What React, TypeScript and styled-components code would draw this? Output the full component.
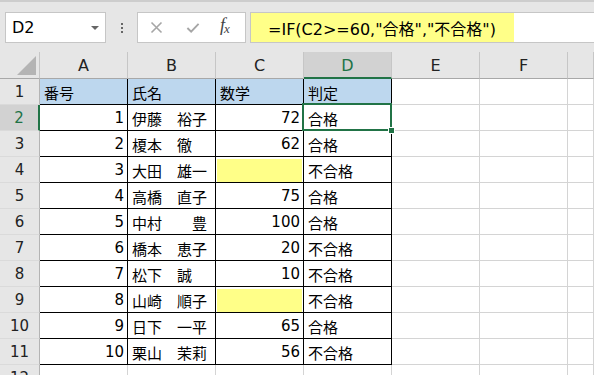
import React from "react";
import styled, { createGlobalStyle, css } from "styled-components";

const GREEN = "#217346";
const YELLOW = "#ffff88";

const GlobalStyle = createGlobalStyle`
  html, body {
    margin: 0;
    padding: 0;
    background: #fff;
  }
  body {
    width: 594px;
    height: 375px;
    overflow: hidden;
    font-family: "DejaVu Sans", "Noto Sans CJK JP", sans-serif;
    color: #000;
  }
`;

type Align = "left" | "right" | "center";

interface Row {
  no: string;
  name: string;
  score: string;
  result: string;
  blank?: boolean;
}

const rows: Row[] = [
  { no: "1", name: "伊藤　裕子", score: "72", result: "合格" },
  { no: "2", name: "榎本　徹", score: "62", result: "合格" },
  { no: "3", name: "大田　雄一", score: "", result: "不合格", blank: true },
  { no: "4", name: "高橋　直子", score: "75", result: "合格" },
  { no: "5", name: "中村　　豊", score: "100", result: "合格" },
  { no: "6", name: "橋本　恵子", score: "20", result: "不合格" },
  { no: "7", name: "松下　誠", score: "10", result: "不合格" },
  { no: "8", name: "山崎　順子", score: "", result: "不合格", blank: true },
  { no: "9", name: "日下　一平", score: "65", result: "合格" },
  { no: "10", name: "栗山　茉莉", score: "56", result: "不合格" },
];

const columns = ["A", "B", "C", "D", "E", "F", ""];

const App = () => {
  return (
    <>
      <GlobalStyle />
      <Window>
        <Toolbar>
          <NameBox>
            <span>D2</span>
            <DropArrow />
          </NameBox>
          <Grip>
            <i />
            <i />
            <i />
          </Grip>
          <ButtonsBox>
            <ToolGlyph>
              <svg width="13" height="13" viewBox="0 0 13 13">
                <path d="M1.5 1.5 L11.5 11.5 M11.5 1.5 L1.5 11.5" stroke="#a6a6a6" strokeWidth="1.6" fill="none" />
              </svg>
            </ToolGlyph>
            <ToolGlyph>
              <svg width="15" height="13" viewBox="0 0 15 13">
                <path d="M1.5 7 L5.5 11 L13.5 2.5" stroke="#a6a6a6" strokeWidth="2" fill="none" />
              </svg>
            </ToolGlyph>
            <FxGlyph>
              f<sub>x</sub>
            </FxGlyph>
          </ButtonsBox>
          <FormulaInput>
            <FormulaText>=IF(C2&gt;=60,"合格","不合格")</FormulaText>
          </FormulaInput>
        </Toolbar>

        <Sheet>
          <Corner>
            <svg width="19" height="19" viewBox="0 0 19 19">
              <polygon points="19,0 19,19 0,19" fill="#b4b4b4" />
            </svg>
          </Corner>
          {columns.map((c) => (
            <ColHeader key={c || "g"} $selected={c === "D"}>
              {c}
            </ColHeader>
          ))}

          <RowHeader>1</RowHeader>
          <Cell $boxed $head>番号</Cell>
          <Cell $boxed $head>氏名</Cell>
          <Cell $boxed $head>数学</Cell>
          <Cell $boxed $head>判定</Cell>
          <Cell />
          <Cell />
          <Cell />

          {rows.map((r, i) => (
            <React.Fragment key={r.no}>
              <RowHeader $selected={i === 0}>{i + 2}</RowHeader>
              <Cell $boxed $align="right">{r.no}</Cell>
              <Cell $boxed>{r.name}</Cell>
              <Cell $boxed $align="right" $blank={r.blank}>
                {r.score}
              </Cell>
              <Cell $boxed $active={i === 0}>
                {r.result}
              </Cell>
              <Cell />
              <Cell />
              <Cell />
            </React.Fragment>
          ))}

          <RowHeader>12</RowHeader>
          {columns.map((c) => (
            <Cell key={"r12" + c} />
          ))}
        </Sheet>
      </Window>
    </>
  );
};

const Window = styled.div`
  width: 594px;
  height: 375px;
  overflow: hidden;
  background: #fff;
`;

const Toolbar = styled.div`
  height: 52px;
  box-sizing: border-box;
  background: #e6e6e6;
  border-top: 2px solid #cdcdcd;
  padding: 10px 0 0 5px;
  display: flex;
  align-items: flex-start;
`;

const NameBox = styled.div`
  width: 101px;
  height: 31px;
  box-sizing: border-box;
  background: #fff;
  border: 1px solid #c6c6c6;
  display: flex;
  align-items: center;
  justify-content: space-between;
  padding: 0 6px 0 6px;
  font-size: 16px;
  color: #000;
`;

const DropArrow = styled.span`
  width: 0;
  height: 0;
  border-left: 4px solid transparent;
  border-right: 4px solid transparent;
  border-top: 4px solid #666;
  margin-top: 1px;
`;

const Grip = styled.div`
  width: 31px;
  height: 31px;
  display: flex;
  flex-direction: column;
  align-items: center;
  justify-content: center;
  gap: 2px;

  i {
    width: 2px;
    height: 2px;
    background: #666;
  }
`;

const ButtonsBox = styled.div`
  width: 109px;
  height: 31px;
  box-sizing: border-box;
  background: #fff;
  border: 1px solid #c6c6c6;
  display: flex;
  align-items: center;
  padding-left: 12px;
  gap: 22px;
`;

const ToolGlyph = styled.span`
  display: flex;
  align-items: center;
  width: 14px;
`;

const FxGlyph = styled.span`
  font-family: "Liberation Serif", serif;
  font-style: italic;
  font-size: 18px;
  color: #444;
  margin-left: -2px;
  margin-top: -3px;

  sub {
    font-size: 13px;
    vertical-align: -2px;
    margin-left: -1px;
  }
`;

const FormulaInput = styled.div`
  flex: 1;
  height: 31px;
  margin-left: 4px;
  box-sizing: border-box;
  background: #fff;
  border: 1px solid #c6c6c6;
  border-right: none;
  display: flex;
`;

const FormulaText = styled.div`
  width: 263px;
  background: ${YELLOW};
  display: flex;
  align-items: center;
  padding-left: 17px;
  box-sizing: border-box;
  font-size: 16px;
  white-space: nowrap;
`;

const Sheet = styled.div`
  display: grid;
  grid-template-columns: 40px 88px 88px 88px 88px 88px 88px 1fr;
  grid-template-rows: 27px;
  grid-auto-rows: 26px;
`;

const Corner = styled.div`
  background: #e6e6e6;
  border-right: 1px solid #c6c6c6;
  border-bottom: 1px solid #a8a8a8;
  display: flex;
  align-items: flex-end;
  justify-content: flex-end;
  padding: 0 3px 3px 0;
`;

const ColHeader = styled.div<{ $selected?: boolean }>`
  background: ${({ $selected }) => ($selected ? "#d2d2d2" : "#e6e6e6")};
  color: ${({ $selected }) => ($selected ? GREEN : "#222")};
  border-right: 1px solid #c6c6c6;
  border-bottom: ${({ $selected }) =>
    $selected ? `2px solid ${GREEN}` : "1px solid #a8a8a8"};
  display: flex;
  align-items: center;
  justify-content: center;
  font-size: 16px;
  padding-top: 1px;
`;

const RowHeader = styled.div<{ $selected?: boolean }>`
  background: ${({ $selected }) => ($selected ? "#d2d2d2" : "#e6e6e6")};
  color: ${({ $selected }) => ($selected ? GREEN : "#222")};
  border-right: ${({ $selected }) =>
    $selected ? `2px solid ${GREEN}` : "1px solid #b4b4b4"};
  border-bottom: 1px solid #dadada;
  display: flex;
  align-items: center;
  justify-content: center;
  font-size: 15px;
  padding-top: 1px;
`;

const Cell = styled.div<{
  $align?: Align;
  $boxed?: boolean;
  $head?: boolean;
  $blank?: boolean;
  $active?: boolean;
}>`
  position: relative;
  box-sizing: border-box;
  display: flex;
  align-items: center;
  justify-content: ${({ $align }) =>
    $align === "right" ? "flex-end" : $align === "center" ? "center" : "flex-start"};
  padding: 1px 3px 0 4px;
  font-size: 15px;
  white-space: nowrap;
  overflow: visible;
  border-right: 1px solid ${({ $boxed }) => ($boxed ? "#000" : "#d4d4d4")};
  border-bottom: 1px solid ${({ $boxed }) => ($boxed ? "#000" : "#d4d4d4")};
  background: ${({ $head, $blank }) =>
    $head ? "#bdd7ee" : $blank ? YELLOW : "#fff"};

  ${({ $blank }) =>
    $blank &&
    css`
      box-shadow: inset 1px 2px 0 #fff, inset -1px 0 0 #fff;
    `}

  ${({ $active }) =>
    $active &&
    css`
      &::after {
        content: "";
        position: absolute;
        left: -2px;
        top: -2px;
        right: -1px;
        bottom: -1px;
        border: 2px solid ${GREEN};
        pointer-events: none;
      }
      &::before {
        content: "";
        position: absolute;
        right: -4px;
        bottom: -4px;
        width: 5px;
        height: 5px;
        background: ${GREEN};
        border: 1px solid #fff;
        z-index: 2;
      }
    `}
`;

export default App;
